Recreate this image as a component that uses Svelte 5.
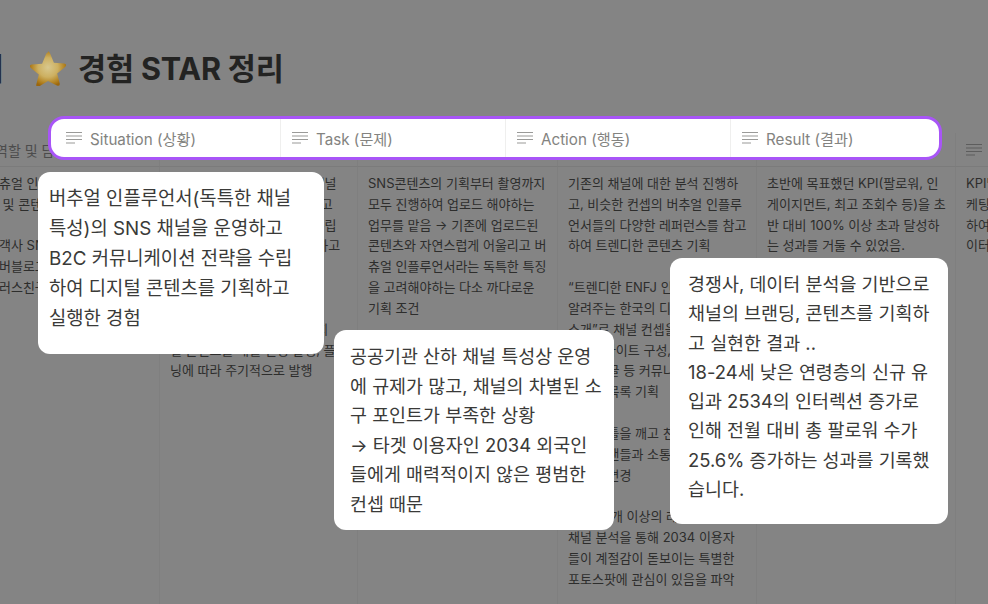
<script>
  const columns = [
    { head: "역할 및 담당", lines: ["버츄얼 인플루언서", "앱 및 콘텐츠 기획", "", "고객사 SNS 운영", "이버블로그", "플러스친구 관리"] },
    { head: "내용", lines: ["버츄얼 인플루언서 브랜드 채널", "인스타그램 콘텐츠를 기획하고", "커뮤니케이션 전략을 함께 수립", "하고 콘텐츠를 제작 및 운영하고", "", "", "", "카드뉴스와 릴스 등 여러 디지", "털 콘텐츠를 매월 일정 발행, 플러", "닝에 따라 주기적으로 발행"] },
    { head: "Task", lines: ["SNS콘텐츠의 기획부터 촬영까지", "모두 진행하여 업로드 해야하는", "업무를 맡음 → 기존에 업로드된", "콘텐츠와 자연스럽게 어울리고 버", "츄얼 인플루언서라는 독특한 특징", "을 고려해야하는 다소 까다로운", "기획 조건"] },
    { head: "Action", lines: ["기존의 채널에 대한 분석 진행하", "고, 비슷한 컨셉의 버추얼 인플루", "언서들의 다양한 레퍼런스를 참고", "하여 트렌디한 콘텐츠 기획", "", "“트렌디한 ENFJ 인플루언서가", "알려주는 한국의 디저트 맛집", "소개”로 채널 컨셉을 정하고", "블로그사이트 구성,", "댓글 답글 등 커뮤니케이션", "이벤트 목록 기획", "", "기존의 틀을 깨고 친근하게", "외국인 팬들과 소통하도록", "콘텐츠 변경", "", "계정 70개 이상의 레퍼런스", "채널 분석을 통해 2034 이용자", "들이 계절감이 돋보이는 특별한", "포토스팟에 관심이 있음을 파악"] },
    { head: "Result", lines: ["초반에 목표했던 KPI(팔로워, 인", "게이지먼트, 최고 조회수 등)을 초", "반 대비 100% 이상 초과 달성하", "는 성과를 거둘 수 있었음."] },
    { head: "KPI", lines: ["KPI달성", "케팅 전략", "하여 성과", "이터 분석"] }
  ];

  const heads = ["Situation (상황)", "Task (문제)", "Action (행동)", "Result (결과)"];

  const notes = [
    {
      cls: "situation",
      lines: ["버추얼 인플루언서(독특한 채널", "특성)의 SNS 채널을 운영하고", "B2C 커뮤니케이션 전략을 수립", "하여 디지털 콘텐츠를 기획하고", "실행한 경험"]
    },
    {
      cls: "task",
      lines: ["공공기관 산하 채널 특성상 운영", "에 규제가 많고, 채널의 차별된 소", "구 포인트가 부족한 상황", "→ 타겟 이용자인 2034 외국인", "들에게 매력적이지 않은 평범한", "컨셉 때문"]
    },
    {
      cls: "result",
      lines: ["경쟁사, 데이터 분석을 기반으로", "채널의 브랜딩, 콘텐츠를 기획하", "고 실현한 결과 ..", "18-24세 낮은 연령층의 신규 유", "입과 2534의 인터렉션 증가로", "인해 전월 대비 총 팔로워 수가", "25.6% 증가하는 성과를 기록했", "습니다."]
    }
  ];
</script>

{#snippet linesIcon()}
  <svg class="icon" viewBox="0 0 16 14" aria-hidden="true">
    <path d="M0 1.500h16M0 5h16M0 8.500h16M0 12h9" />
  </svg>
{/snippet}

<div class="page">
  <h1 class="title">
    <span class="prev">정리</span>
    <svg class="star" viewBox="0 0 36 36" aria-hidden="true">
      <defs>
        <radialGradient id="starFill" cx="50%" cy="45%" r="55%">
          <stop offset="0" stop-color="#d8c88e" />
          <stop offset="0.5" stop-color="#cdb061" />
          <stop offset="0.85" stop-color="#b07f1e" />
          <stop offset="1" stop-color="#9b660c" />
        </radialGradient>
      </defs>
      <path
        d="M18 1.500c.9 0 1.500.6 1.900 1.500l4 9.700 10.300.8c1 .1 1.700.6 1.800 1.300.2.800-.2 1.500-.9 2.100l-7.900 6.600 2.500 10.100c.2 1-.1 1.700-.7 2-.6.400-1.300.3-2.100-.2L18 31l-8.900 5.400c-.8.500-1.500.6-2.100.2-.6-.3-.9-1-.7-2l2.500-10.100-7.900-6.600c-.7-.6-1.100-1.300-.9-2.100.1-.7.800-1.200 1.800-1.300l10.300-.8 4-9.700c.4-.9 1-1.500 1.900-1.500z"
        fill="url(#starFill)"
      />
    </svg>
    <span class="name">경험 STAR 정리</span>
  </h1>

  <div class="table">
    {#each columns as col}
      <div class="head">
        {@render linesIcon()}
        <span>{col.head}</span>
      </div>
    {/each}
    {#each columns as col}
      <div class="cell">
        {#each col.lines as line}
          <div class="line">{line}</div>
        {/each}
      </div>
    {/each}
  </div>

  <div class="highlight">
    {#each heads as head}
      <div class="hl-cell">
        {@render linesIcon()}
        <span>{head}</span>
      </div>
    {/each}
  </div>

  {#each notes as note}
    <div class="note {note.cls}">
      {#each note.lines as line}
        <div>{line}</div>
      {/each}
    </div>
  {/each}
</div>

<style>
  :global(body) {
    margin: 0;
    background: #848484;
  }

  .page {
    position: relative;
    width: 988px;
    height: 604px;
    overflow: hidden;
    background: #848484;
    color: #2b2b2a;
    font-family: Inter, "Noto Sans CJK KR", sans-serif;
  }

  .title {
    display: flex;
    align-items: center;
    height: 40px;
    margin: 49px 0 0 -21px;
    font-size: 30.600px;
    font-weight: 700;
    line-height: 40px;
    letter-spacing: -0.2px;
    color: #232322;
    white-space: nowrap;
  }

  .prev {
    width: 25px;
    overflow: hidden;
    direction: rtl;
  }

  .star {
    width: 36px;
    height: 36px;
    margin: 0 12px 3px 26px;
    flex: none;
  }

  .table {
    display: grid;
    grid-template-columns: 182px 198px 200px 199px 199px 199px;
    grid-template-rows: 34px 1fr;
    margin: 44px 0 0 -22px;
    height: 477px;
    border-bottom: 1px solid #7a7a7a;
  }

  .head {
    display: flex;
    align-items: center;
    gap: 8px;
    padding: 0 0 0 10px;
    font-size: 14px;
    color: #4c4c4c;
    white-space: nowrap;
    border-bottom: 1px solid #7b7b7b;
    border-right: 1px solid #7f7f7f;
  }

  .head:first-child {
    padding-left: 0;
    gap: 1px;
  }

  .head .icon {
    stroke: #5d5d5d;
  }

  .cell {
    padding: 6px 0 0 9px;
    font-size: 13px;
    line-height: 20.830px;
    color: #2d2d2c;
    white-space: nowrap;
    border-right: 1px solid #7f7f7f;
    overflow: hidden;
  }

  .cell:not(:nth-child(7)) {
    padding-left: 10px;
  }

  .line {
    height: 20.830px;
  }

  .icon {
    width: 16px;
    height: 14px;
    flex: none;
    fill: none;
    stroke: #9a9a98;
    stroke-width: 1.200;
  }

  .highlight {
    position: absolute;
    left: 48px;
    top: 116px;
    width: 888px;
    height: 38px;
    display: flex;
    background: #fff;
    border: 3px solid #a855f7;
    border-radius: 16px;
  }

  .hl-cell {
    display: flex;
    align-items: center;
    gap: 8px;
    width: 225px;
    padding-left: 11px;
    box-sizing: border-box;
    font-size: 15.200px;
    color: #838380;
    white-space: nowrap;
    border-right: 1px solid #efefee;
  }

  .hl-cell:first-child {
    width: 230px;
    padding-left: 15px;
  }

  .hl-cell:last-child {
    flex: 1;
    border-right: 0;
  }

  .note {
    position: absolute;
    box-sizing: border-box;
    background: #fff;
    border-radius: 12px;
    font-size: 18.450px;
    line-height: 29.600px;
    color: #3a3a38;
    white-space: nowrap;
  }

  .situation {
    left: 38px;
    top: 172px;
    width: 286px;
    height: 182px;
    padding: 12px 0 0 11px;
    font-size: 18.800px;
    line-height: 30px;
  }

  .task {
    left: 334px;
    top: 330px;
    width: 280px;
    height: 200px;
    padding: 12px 0 0 16px;
  }

  .result {
    left: 670px;
    top: 258px;
    width: 278px;
    height: 266px;
    padding: 12px 0 0 18px;
    line-height: 29.300px;
  }
</style>
